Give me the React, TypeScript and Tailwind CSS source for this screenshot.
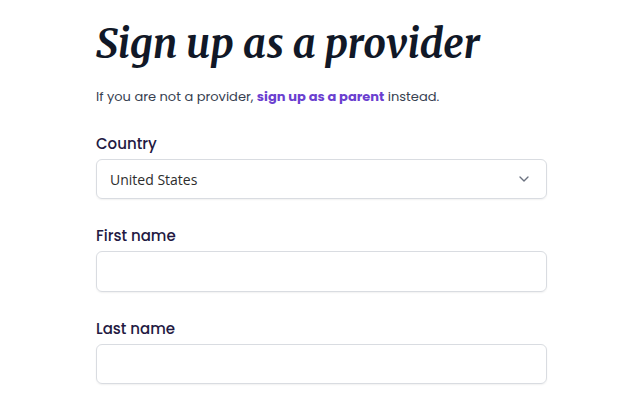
import { ChevronDown } from 'lucide-react'

const sans = 'font-["Poppins","DejaVu_Sans",sans-serif]'

function Field({ label, children }: { label: string; children: React.ReactNode }) {
  return (
    <div className="flex flex-col">
      <label className="text-[15px] font-medium leading-[22px] text-[#231942] mb-[4px] font-['Poppins','DejaVu_Sans',sans-serif]">
        {label}
      </label>
      {children}
    </div>
  )
}

export default function App() {
  return (
    <div className="min-h-[400px] bg-white pl-[96px] pt-[16px]">
      <div className="w-[451px]">
        <h1 className="font-['Merriweather','Liberation_Serif',serif] italic font-bold text-[40px] leading-[56px] text-[#111827] whitespace-nowrap">
          Sign up as a provider
        </h1>
        <p className={`mt-[15px] text-[13px] leading-[20px] text-[#374151] ${sans}`}>
          If you are not a provider,{' '}
          <a href="#" className="font-bold text-[#6b3fd0]">sign up as a parent</a> instead.
        </p>
        <div className="mt-[26px] flex flex-col gap-[26px]">
          <Field label="Country">
            <div className="h-[40px] rounded-[6px] border border-[#d9dce1] shadow-[0_1px_2px_rgba(0,0,0,0.06)] flex items-center justify-between pl-[13px] pr-[14px]">
              <span className="font-['Open_Sans',sans-serif] text-[14px] text-[#2d2d2d]">United States</span>
              <ChevronDown className="w-[16px] h-[16px] text-[#6b7280]" strokeWidth={2} />
            </div>
          </Field>
          <Field label="First name">
            <input className="h-[41px] rounded-[6px] border border-[#d9dce1] shadow-[0_1px_2px_rgba(0,0,0,0.06)] outline-none" />
          </Field>
          <Field label="Last name">
            <input className="h-[40px] rounded-[6px] border border-[#d9dce1] shadow-[0_1px_2px_rgba(0,0,0,0.06)] outline-none" />
          </Field>
        </div>
      </div>
    </div>
  )
}
